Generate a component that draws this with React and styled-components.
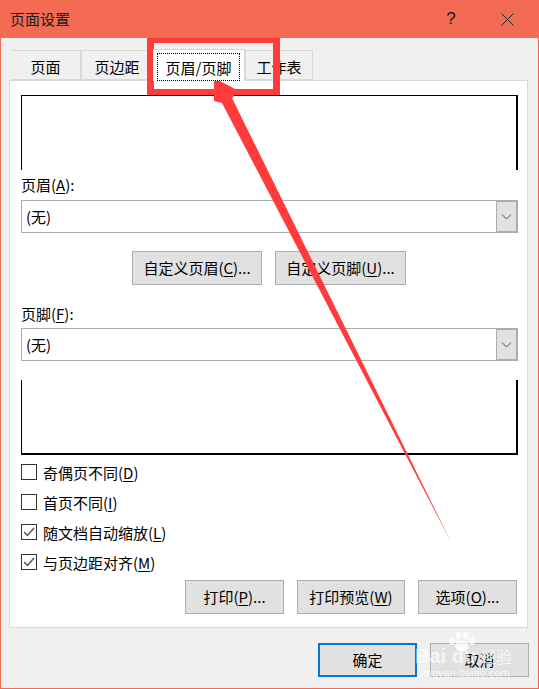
import React from 'react';
import styled, { createGlobalStyle } from 'styled-components';

const Global = createGlobalStyle`
  html, body { margin: 0; padding: 0; background: #f0f0f0; }
`;

const Win = styled.div`
  position: relative;
  width: 539px;
  height: 689px;
  box-sizing: border-box;
  border: 1px solid #f26b52;
  border-top: 0;
  background: #f0f0f0;
  display: flex;
  flex-direction: column;
  overflow: hidden;
  font-family: "Noto Sans CJK SC", "Liberation Sans", sans-serif;
  font-size: 15px;
  color: #000;
`;
const TitleBar = styled.div`
  height: 38px;
  flex: none;
  background: #f26b52;
  display: flex;
  align-items: center;
  padding: 0 24px 0 9px;
  color: #1a1a1a;
`;
const Title = styled.div`
  font-size: 15px;
  flex: 1;
  line-height: 38px;
`;
const Help = styled.div`
  font-family: "Liberation Sans", sans-serif;
  font-size: 17px;
  width: 16px;
  text-align: center;
  margin-right: 42px;
`;
const TabRow = styled.div`
  display: flex;
  height: 30px;
  margin: 12px 0 0 10px;
  flex: none;
  align-items: flex-end;
`;
const Tab = styled.div`
  box-sizing: border-box;
  width: ${p => p.$w}px;
  height: ${p => (p.$active ? 32 : 30)}px;
  background: ${p => (p.$active ? '#fff' : '#f0f0f0')};
  border: 1px solid #d9d9d9;
  border-left: ${p => (p.$first || p.$active ? '0' : '1px solid #d9d9d9')};
  border-bottom: ${p => (p.$active ? '0' : '1px solid #d9d9d9')};
  margin-bottom: ${p => (p.$active ? -1 : 0)}px;
  z-index: ${p => (p.$active ? 1 : 0)};
  display: flex;
  align-items: center;
  justify-content: center;
  padding-top: ${p => (p.$active ? 0 : 2)}px;
`;
const TabFocus = styled.span`
  box-sizing: border-box;
  width: 83px;
  height: 28px;
  margin-top: 3px;
  border: 1px dotted #000;
  display: flex;
  align-items: center;
  justify-content: center;
`;
const Panel = styled.div`
  box-sizing: border-box;
  margin-left: 8px;
  width: 519px;
  height: 548px;
  flex: none;
  background: #fff;
  border: 1px solid #d9d9d9;
  padding: 14px 9px 0 11px;
  display: flex;
  flex-direction: column;
`;
const Preview = styled.div`
  box-sizing: border-box;
  height: 75px;
  flex: none;
  margin-top: ${p => p.$mt || 0}px;
  border-left: 1px solid #000;
  border-right: 2px solid #000;
  ${p => (p.$top ? 'border-top: 1px solid #000;' : 'border-bottom: 2px solid #000;')}
`;
const FieldLabel = styled.div`
  line-height: 20px;
  margin-top: ${p => p.$mt}px;
  height: 20px;
`;
const Select = styled.div`
  box-sizing: border-box;
  height: 33px;
  flex: none;
  margin-top: ${p => p.$mt}px;
  border: 1px solid #adadad;
  display: flex;
  align-items: center;
  justify-content: space-between;
  padding-left: 4px;
`;
const Arrow = styled.div`
  box-sizing: border-box;
  width: 21px;
  height: 31px;
  background: #e1e1e1;
  border: 1px solid #adadad;
  display: flex;
  align-items: center;
  justify-content: center;
`;
const CenterRow = styled.div`
  display: flex;
  gap: 13px;
  margin: 18px 0 0 111px;
`;
const Btn = styled.div`
  box-sizing: border-box;
  width: ${p => p.$w}px;
  height: 34px;
  padding-bottom: 2px;
  background: #e1e1e1;
  border: 1px solid #adadad;
  display: flex;
  align-items: center;
  justify-content: center;
  white-space: nowrap;
`;
const Checks = styled.div`
  display: flex;
  flex-direction: column;
  gap: 14px;
  margin-top: 9px;
`;
const CheckRow = styled.div`
  display: flex;
  align-items: center;
  height: 16px;
  gap: 6px;
`;
const Box = styled.div`
  box-sizing: border-box;
  width: 16px;
  height: 16px;
  border: 1px solid #333;
  background: #fff;
  display: flex;
  align-items: center;
  justify-content: center;
`;
const ActionRow = styled.div`
  display: flex;
  gap: 13px;
  margin: 10px 0 0 164px;
`;
const Footer = styled.div`
  display: flex;
  justify-content: flex-end;
  gap: 13px;
  margin-top: 15px;
  padding-right: 9px;
`;
const PrimaryBtn = styled(Btn)`
  border: 2px solid #0078d7;
`;
const Overlay = styled.svg`
  position: absolute;
  left: 0;
  top: 0;
  width: 539px;
  height: 689px;
  pointer-events: none;
`;
const U = styled.span`
  text-decoration: underline;
  text-underline-offset: 2px;
`;
const Watermark = styled.div`
  position: absolute;
  left: 414px;
  top: 632px;
  width: 100px;
  color: rgba(255, 255, 255, 0.7);
  font-family: "Liberation Sans", sans-serif;
  pointer-events: none;
`;
const Paw = styled.svg`
  position: absolute;
  left: 33px;
  top: 0;
`;
const WatermarkMain = styled.div`
  margin-top: 14px;
  font-size: 20px;
  font-weight: 700;
  line-height: 20px;
  white-space: nowrap;
`;
const WatermarkCn = styled.span`
  font-family: "Noto Sans CJK SC", sans-serif;
  font-size: 16px;
  font-weight: 400;
  margin-left: 4px;
`;
const WatermarkSub = styled.div`
  font-size: 11px;
  line-height: 13px;
  margin: 1px 0 0 6px;
  white-space: nowrap;
`;

const Chevron = () => (
  <svg width="11" height="6" viewBox="0 0 11 6"><path d="M1 0.5 L5.5 5 L10 0.5" fill="none" stroke="#555" strokeWidth="1" /></svg>
);
const Tick = () => (
  <svg width="12" height="10" viewBox="0 0 12 10"><path d="M1 5 L4.5 8.5 L11 1" fill="none" stroke="#555" strokeWidth="1.5" /></svg>
);
const Check = ({ on, children }) => (
  <CheckRow><Box>{on && <Tick />}</Box><span>{children}</span></CheckRow>
);

export default function App() {
  return (
    <>
      <Global />
      <Win>
        <TitleBar>
          <Title>页面设置</Title>
          <Help>?</Help>
          <svg width="13" height="13" viewBox="0 0 13 13"><path d="M0.5 0.5 L12.5 12.5 M12.5 0.5 L0.5 12.5" stroke="#222" strokeWidth="1" /></svg>
        </TitleBar>
        <TabRow>
          <Tab $first $w={70}>页面</Tab>
          <Tab $w={72}>页边距</Tab>
          <Tab $active $w={92}><TabFocus>页眉/页脚</TabFocus></Tab>
          <Tab $w={68}>工作表</Tab>
        </TabRow>
        <Panel>
          <Preview $top />
          <FieldLabel $mt={5}>页眉(<U>A</U>):</FieldLabel>
          <Select $mt={5}>(无)<Arrow><Chevron /></Arrow></Select>
          <CenterRow>
            <Btn $w={130}>自定义页眉(<U>C</U>)...</Btn>
            <Btn $w={131}>自定义页脚(<U>U</U>)...</Btn>
          </CenterRow>
          <FieldLabel $mt={19}>页脚(<U>F</U>):</FieldLabel>
          <Select $mt={4}>(无)<Arrow><Chevron /></Arrow></Select>
          <Preview $mt={19} />
          <Checks>
            <Check>奇偶页不同(<U>D</U>)</Check>
            <Check>首页不同(<U>I</U>)</Check>
            <Check on>随文档自动缩放(<U>L</U>)</Check>
            <Check on>与页边距对齐(<U>M</U>)</Check>
          </Checks>
          <ActionRow>
            <Btn $w={99}>打印(<U>P</U>)...</Btn>
            <Btn $w={108}>打印预览(<U>W</U>)</Btn>
            <Btn $w={99}>选项(<U>O</U>)...</Btn>
          </ActionRow>
        </Panel>
        <Footer>
          <PrimaryBtn $w={99}>确定</PrimaryBtn>
          <Btn $w={99}>取消</Btn>
        </Footer>
        <Watermark>
          <Paw width="28" height="20" viewBox="0 0 28 20" fill="rgba(255,255,255,0.75)">
            <ellipse cx="4" cy="9" rx="3" ry="4" />
            <ellipse cx="10.5" cy="3.5" rx="3" ry="3.5" />
            <ellipse cx="18" cy="3.5" rx="3" ry="3.5" />
            <ellipse cx="24" cy="9" rx="3" ry="4" />
            <ellipse cx="14" cy="14" rx="7" ry="5.5" />
          </Paw>
          <WatermarkMain>Bai du<WatermarkCn>经验</WatermarkCn></WatermarkMain>
          <WatermarkSub>jingyan.baidu.com</WatermarkSub>
        </Watermark>
        <Overlay viewBox="0 0 539 689">
          <path fillRule="evenodd" fill="#ff3b3b" d="M146 38 H279 V95 H146 Z M153 43 V89 H272 V43 Z" />
          <path fill="#ff3b3b" d="M213 78 L238 91 L231 98 L450 542 L221 103 L213 101 Z" />
        </Overlay>
      </Win>
    </>
  );
}
